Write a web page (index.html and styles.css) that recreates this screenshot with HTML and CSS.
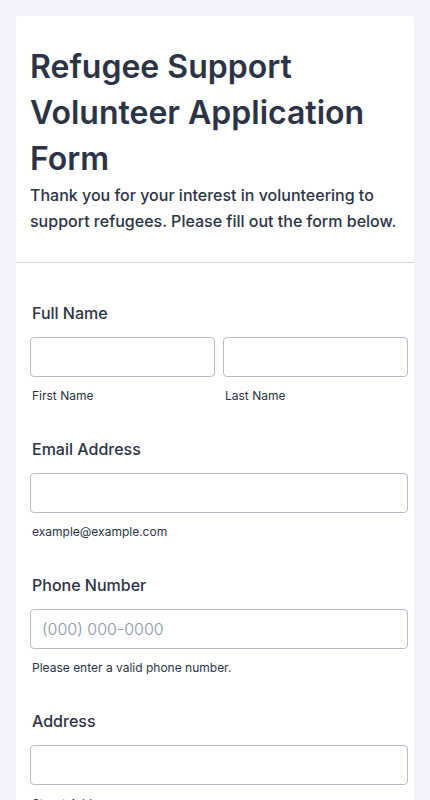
FILE: index.html
```html
<!DOCTYPE html>
<html lang="en">
<head>
    <meta charset="UTF-8">
    <meta name="viewport" content="width=device-width, initial-scale=1.0">
    <title>Refugee Support Volunteer Application Form</title>
    <link rel="stylesheet" href="styles.css">
</head>
<body>
    <div class="form-card">
        <div class="form-header">
            <h1 class="form-title">Refugee Support Volunteer Application Form</h1>
            <p class="form-subtitle">Thank you for your interest in volunteering to support refugees. Please fill out the form below.</p>
        </div>
        <div class="form-fields">
            <div class="field">
                <label class="field-label">Full Name</label>
                <div class="field-row">
                    <div class="field-col">
                        <input class="field-input" type="text">
                        <span class="sublabel">First Name</span>
                    </div>
                    <div class="field-col">
                        <input class="field-input" type="text">
                        <span class="sublabel">Last Name</span>
                    </div>
                </div>
            </div>
            <div class="field">
                <label class="field-label">Email Address</label>
                <input class="field-input" type="email">
                <span class="sublabel">example@example.com</span>
            </div>
            <div class="field">
                <label class="field-label">Phone Number</label>
                <input class="field-input" type="tel" placeholder="(000) 000-0000">
                <span class="sublabel">Please enter a valid phone number.</span>
            </div>
            <div class="field">
                <label class="field-label">Address</label>
                <input class="field-input" type="text">
                <span class="sublabel">Street Address</span>
            </div>
        </div>
    </div>
</body>
</html>
```

FILE: styles.css
```css
* { margin: 0; padding: 0; box-sizing: border-box; }
body {
    background: #f3f3fe;
    font-family: Inter, "Noto Sans", sans-serif;
    color: #2c3345;
    padding: 16px;
}
.form-card {
    background: #fff;
    border-radius: 3px;
}
.form-header {
    padding: 28px 14px 28px 14px;
    border-bottom: 1px solid #d8d8e0;
}
.form-title {
    font-size: 32px;
    font-weight: 600;
    line-height: 46px;
}
.form-subtitle {
    font-size: 16px;
    font-weight: 500;
    line-height: 26px;
}
.form-fields {
    display: flex;
    flex-direction: column;
    gap: 35px;
    padding: 40px 6px 40px 14px;
}
.field {
    display: flex;
    flex-direction: column;
}
.field-label {
    font-size: 16px;
    font-weight: 500;
    line-height: 20px;
    padding-left: 2px;
    margin-bottom: 14px;
}
.field-row {
    display: flex;
    gap: 8px;
}
.field-col {
    flex: 1;
    display: flex;
    flex-direction: column;
}
.field-input {
    height: 40px;
    width: 100%;
    border: 1px solid #b8bdc9;
    border-radius: 4px;
    padding: 0 11px;
    font-family: inherit;
    font-size: 16px;
    font-weight: 300;
    color: #2c3345;
    background: #fff;
}
.field-input::placeholder { color: #8894ab; }
.sublabel {
    font-size: 12px;
    line-height: 16px;
    margin-top: 11px;
    padding-left: 2px;
}
```
